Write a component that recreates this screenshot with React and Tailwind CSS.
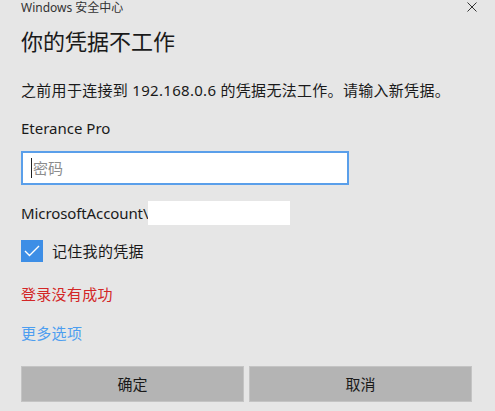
export default function App() {
  const font = { fontFamily: '"Noto Sans", "Noto Sans CJK SC", sans-serif' };
  return (
    <div className="w-[495px] h-[411px] overflow-hidden bg-[#e6e6e6] text-[#1a1a1a]" style={font}>
      <div className="flex flex-col pl-[21px] pr-[23px]">
        {/* Title bar */}
        <div className="flex h-[15px] items-start justify-between">
          <span className="text-[12px] leading-[15px] text-[#333]">Windows 安全中心</span>
          <svg className="mt-[2px] mr-[-5px]" width="10" height="10" viewBox="0 0 10 10">
            <path d="M0.5 0.5 L9.5 9.5 M9.5 0.5 L0.5 9.5" stroke="#333" strokeWidth="1" />
          </svg>
        </div>

        <div className="mt-[12px] h-[28px] text-[22px] leading-[28px]">你的凭据不工作</div>

        <div className="mt-[25px] h-[20px] text-[15px] leading-[20px] tracking-[0.3px]">
          之前用于连接到 192.168.0.6 的凭据无法工作。请输入新凭据。
        </div>

        <div className="mt-[18px] h-[20px] text-[15px] leading-[20px]">Eterance Pro</div>

        <div className="mt-[13px] flex h-[34px] w-[328px] items-center border-2 border-[#5a9fea] bg-white pl-[8px]">
          <span className="h-[20px] w-[1px] bg-[#222]"></span>
          <span className="ml-[1px] text-[15px] leading-[20px] text-[#8c8c8c]">密码</span>
        </div>

        <div className="mt-[16px] flex h-[24px] items-center">
          <span className="text-[15px] leading-[20px] tracking-[-0.1px]">MicrosoftAccount\</span>
          <span className="h-[24px] w-[142px] bg-white"></span>
        </div>

        <div className="mt-[15px] flex h-[22px] items-center gap-[9px]">
          <span className="flex h-[22px] w-[22px] items-center justify-center bg-[#3d8ee6]">
            <svg width="16" height="12" viewBox="0 0 16 12">
              <path d="M1 6 L5.5 10.5 L15 1" fill="none" stroke="white" strokeWidth="1.4" />
            </svg>
          </span>
          <span className="text-[15px] leading-[20px] tracking-[0.3px]">记住我的凭据</span>
        </div>

        <div className="mt-[22px] h-[20px] text-[15px] leading-[20px] tracking-[0.3px] text-[#d32626]">登录没有成功</div>

        <div className="mt-[19px] h-[20px] text-[15px] leading-[20px] tracking-[0.3px] text-[#4d9ef0]">更多选项</div>

        <div className="mt-[23px] flex h-[36px] gap-[5px]">
          <div className="flex h-[36px] w-[223px] items-center justify-center border border-[#c4c4c4] bg-[#b4b4b4] text-[15px]">确定</div>
          <div className="flex h-[36px] w-[223px] items-center justify-center border border-[#c4c4c4] bg-[#b4b4b4] text-[15px]">取消</div>
        </div>
      </div>
    </div>
  );
}
